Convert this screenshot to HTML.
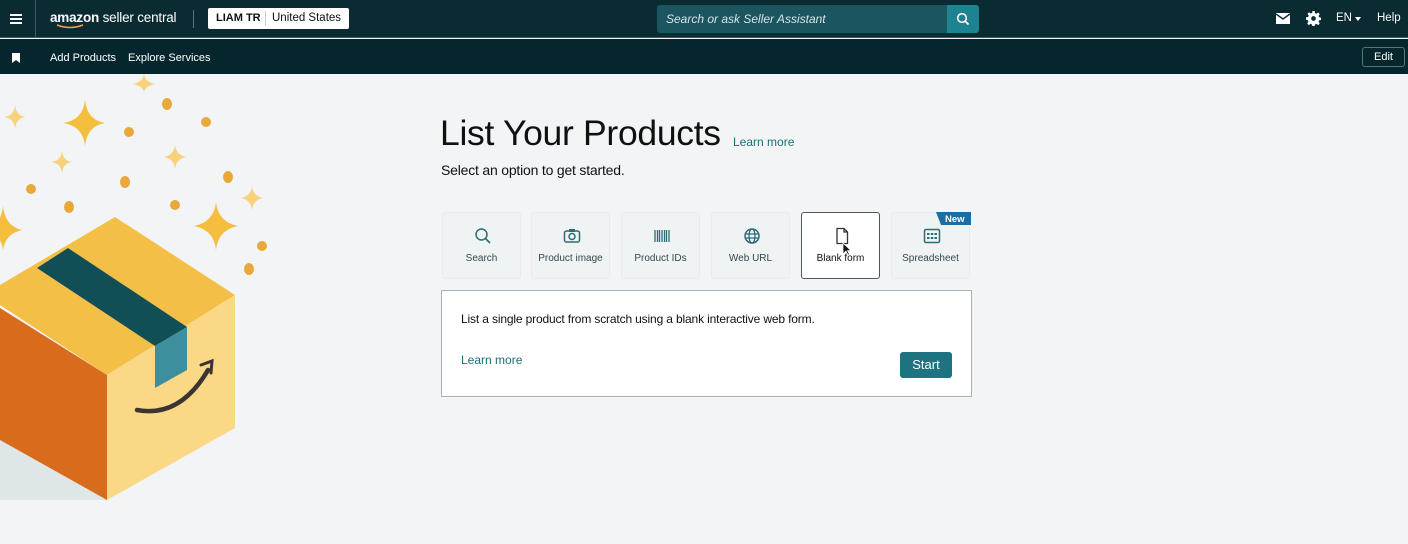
<!DOCTYPE html>
<html><head><meta charset="utf-8"><style>
*{box-sizing:border-box;margin:0;padding:0}
body{width:1408px;height:544px;overflow:hidden;background:#f2f4f5;font-family:"Liberation Sans",sans-serif;position:relative;color:#0f1111}
.top{position:absolute;left:0;top:0;width:1408px;height:38px;background:#0b2b33;border-bottom:1px solid #3d5a61}
.sub{position:absolute;left:0;top:39px;width:1408px;height:35px;background:#06262e}
.w{color:#fff;position:absolute;font-size:11.5px}
.tile{position:absolute;top:212px;width:79px;height:67px;background:#f0f3f4;border:1px solid #e8ecee;border-radius:3px;text-align:center;font-size:10px;color:#33474d}
.tile svg{position:absolute;left:31px;top:14px}
.tile span{position:absolute;left:0;right:0;top:40px}
</style></head><body>
<div class="top">
 <div style="position:absolute;left:10px;top:14px;width:12px;height:2px;background:#fff;box-shadow:0 4px 0 #fff,0 8px 0 #fff"></div>
 <div style="position:absolute;left:35px;top:0;width:1px;height:38px;background:#3d5a61"></div>
 <div class="w" style="left:50px;top:10px;font-size:13.5px;letter-spacing:-0.2px"><b>amazon</b> seller central</div>
 <svg style="position:absolute;left:56px;top:24px" width="30" height="6"><path d="M1 1 Q14 6 27 1" stroke="#f3a847" stroke-width="1.5" fill="none"/></svg>
 <div style="position:absolute;left:193px;top:10px;width:1px;height:18px;background:#5a7378"></div>
 <div style="position:absolute;left:208px;top:8px;width:141px;height:21px;background:#fff;border-radius:2px;font-size:11.5px;line-height:21px">
  <b style="position:absolute;left:8px;font-size:11px">LIAM TR</b><span style="position:absolute;left:57px;top:3px;width:1px;height:15px;background:#ccc"></span><span style="position:absolute;left:64px">United States</span></div>
 <div style="position:absolute;left:657px;top:5px;width:290px;height:28px;background:#1a5560;border-radius:3px 0 0 3px;color:#d8e4e6;font-size:12px;font-style:italic;line-height:28px;padding-left:9px">Search or ask Seller Assistant</div>
 <div style="position:absolute;left:947px;top:5px;width:32px;height:28px;background:#1d8391;border-radius:0 3px 3px 0">
  <svg width="32" height="28"><circle cx="15" cy="13" r="4.3" stroke="#fff" stroke-width="1.6" fill="none"/><path d="M18 16 L21.5 19.5" stroke="#fff" stroke-width="1.8"/></svg></div>
 <svg style="position:absolute;left:1276px;top:13px" width="14" height="11"><rect width="14" height="11" fill="#fff"/><path d="M0 1 L7 6 L14 1" stroke="#0b2b33" stroke-width="1.4" fill="none"/></svg>
 <svg style="position:absolute;left:1306px;top:11px" width="15" height="15" viewBox="0 0 16 16"><path fill="#fff" d="M6.8 0h2.4l.4 2.2 1.5.7 1.9-1.3 1.700 1.7-1.3 1.9.7 1.5 2.2.4v2.4l-2.2.4-.7 1.5 1.3 1.9-1.7 1.7-1.9-1.3-1.5.7-.4 2.2H6.8l-.4-2.2-1.5-.7-1.9 1.3-1.7-1.7 1.3-1.9-.7-1.5L0 9.2V6.8l2.2-.4.7-1.5-1.3-1.9 1.7-1.7 1.9 1.3 1.5-.7z"/><circle cx="8" cy="8" r="2.5" fill="#0b2b33"/></svg>
 <div class="w" style="left:1336px;top:12px">EN</div>
 <div style="position:absolute;left:1355px;top:17px;border:3.5px solid transparent;border-top:4px solid #fff"></div>
 <div class="w" style="left:1377px;top:12px">Help</div>
</div>
<div class="sub">
 <svg style="position:absolute;left:12px;top:14px" width="8" height="10"><path d="M0 0H8V10L4 7L0 10Z" fill="#fff"/></svg>
 <div class="w" style="left:50px;top:13px;font-size:11px">Add Products</div>
 <div class="w" style="left:128px;top:13px;font-size:11px">Explore Services</div>
 <div style="position:absolute;left:1362px;top:8px;width:43px;height:20px;border:1px solid #5a7378;border-radius:3px;color:#fff;font-size:11px;text-align:center;line-height:18px">Edit</div>
</div>

<svg style="position:absolute;left:0;top:74px" width="290" height="440" viewBox="0 74 290 440">
 <g fill="#f5be3f">
  <path d="M85 100 Q87 120 105 123 Q87 126 85 146 Q83 126 63 123 Q83 120 85 100Z"/>
  <path d="M216 202 Q218 222 238 226 Q218 230 216 250 Q214 230 194 226 Q214 222 216 202Z"/>
  <path d="M3 206 Q5 226 22 230 Q5 234 3 250 Q1 234 -15 230 Q1 226 3 206Z"/>
 </g>
 <g fill="#f8d27a">
  <path d="M15 105 Q16 116 26 117 Q16 118 15 129 Q14 118 4 117 Q14 116 15 105Z"/>
  <path d="M62 151 Q63 161 72 162 Q63 163 62 173 Q61 163 51 162 Q61 161 62 151Z"/>
  <path d="M175 145 Q176 155 186 157 Q176 159 175 169 Q174 159 164 157 Q174 155 175 145Z"/>
  <path d="M252 186 Q253 196 263 198 Q253 200 252 210 Q251 200 241 198 Q251 196 252 186Z"/>
  <path d="M144 74 Q145 82 155 84 Q145 86 144 92 Q143 86 133 84 Q143 82 144 74Z"/>
 </g>
 <g fill="#e9a83a">
  <ellipse cx="167" cy="104" rx="5" ry="6"/><circle cx="206" cy="122" r="5"/><circle cx="129" cy="132" r="5"/>
  <ellipse cx="125" cy="182" rx="5" ry="6"/><circle cx="31" cy="189" r="5"/><ellipse cx="69" cy="207" rx="5" ry="6"/>
  <circle cx="175" cy="205" r="5"/><ellipse cx="228" cy="177" rx="5" ry="6"/><circle cx="262" cy="246" r="5"/><ellipse cx="249" cy="269" rx="5" ry="6"/>
 </g>
 <path d="M0 440 L107 500 L0 500Z" fill="#dfe6e8"/>
 <path d="M115 217 L235 295 L107 375 L0 305 L0 285Z" fill="#f4bf47"/>
 <path d="M0 308 L107 375 L107 500 L0 440Z" fill="#d96b1d"/>
 <path d="M107 375 L235 295 L235 428 L107 500Z" fill="#fbd885"/>
 <path d="M37 268 L68 248 L187 327 L155 346Z" fill="#114f57"/>
 <path d="M155 346 L187 327 L187 370 L155 388Z" fill="#3e8f9d"/>
 <path d="M137 410 Q180 418 208 370" stroke="#3b3430" stroke-width="4.5" fill="none" stroke-linecap="round"/>
 <path d="M201 365 L212 361 L211 373" stroke="#3b3430" stroke-width="3" fill="none" stroke-linecap="round"/>
</svg>

<div style="position:absolute;left:440px;top:113px;font-size:35.5px;color:#0f1111;letter-spacing:-0.3px">List Your Products</div>
<div style="position:absolute;left:733px;top:135px;font-size:12px;color:#1b6e78">Learn more</div>
<div style="position:absolute;left:441px;top:162px;font-size:14px;letter-spacing:-0.2px">Select an option to get started.</div>

<div class="tile" style="left:442px"><svg width="18" height="18"><circle cx="7.5" cy="7.5" r="5.5" stroke="#2d6b75" stroke-width="1.5" fill="none"/><path d="M11.5 11.5 L16 16" stroke="#2d6b75" stroke-width="1.6"/></svg><span>Search</span></div>
<div class="tile" style="left:531px"><svg width="18" height="18"><rect x="1.5" y="4" width="15" height="11" rx="2" stroke="#2d6b75" stroke-width="1.5" fill="none"/><rect x="6" y="2" width="6" height="3" fill="#2d6b75"/><circle cx="9" cy="9.5" r="3" stroke="#2d6b75" stroke-width="1.5" fill="none"/></svg><span>Product image</span></div>
<div class="tile" style="left:621px"><svg width="18" height="18"><path d="M2 3V15M4.5 3V15M6.5 3V15M9 3V15M11.5 3V15M13.5 3V15M16 3V15" stroke="#2d6b75" stroke-width="1.3"/></svg><span>Product IDs</span></div>
<div class="tile" style="left:711px"><svg width="18" height="18"><circle cx="9" cy="9" r="7" stroke="#2d6b75" stroke-width="1.5" fill="none"/><ellipse cx="9" cy="9" rx="3" ry="7" stroke="#2d6b75" stroke-width="1.3" fill="none"/><path d="M2 7H16M2 11H16" stroke="#2d6b75" stroke-width="1.3"/></svg><span>Web URL</span></div>
<div class="tile" style="left:801px;background:#fff;border:1px solid #4a5a5e;color:#0f1111"><svg width="18" height="18"><path d="M4 1.5H11L14.5 5V16.5H4Z M11 1.5V5H14.5" stroke="#333" stroke-width="1.3" fill="none"/></svg><span>Blank form</span></div>
<svg style="position:absolute;left:842px;top:242px" width="9" height="14"><path d="M1 1V12L4 9L6 13L7.5 12.3L5.6 8.6H9Z" fill="#111" stroke="#fff" stroke-width=".8"/></svg>
<div class="tile" style="left:891px"><svg width="18" height="18"><rect x="1.5" y="2.5" width="15" height="13" rx="1.5" stroke="#2d6b75" stroke-width="1.5" fill="none"/><g fill="#2d6b75"><rect x="4" y="6" width="2.5" height="2"/><rect x="7.8" y="6" width="2.5" height="2"/><rect x="11.5" y="6" width="2.5" height="2"/><rect x="4" y="10" width="2.5" height="2"/><rect x="7.8" y="10" width="2.5" height="2"/><rect x="11.5" y="10" width="2.5" height="2"/></g></svg><span>Spreadsheet</span></div>
<svg style="position:absolute;left:936px;top:212px" width="35" height="13"><path d="M0 0H35V13H5Z" fill="#1b6ea3"/><text x="9" y="10" font-family="Liberation Sans" font-size="9.5" font-weight="bold" fill="#fff">New</text></svg>

<div style="position:absolute;left:441px;top:290px;width:531px;height:107px;background:#fff;border:1px solid #a8b0b3">
 <div style="position:absolute;left:19px;top:21px;font-size:12px;letter-spacing:-0.15px">List a single product from scratch using a blank interactive web form.</div>
 <div style="position:absolute;left:19px;top:62px;font-size:12px;color:#1b6e78">Learn more</div>
 <div style="position:absolute;left:458px;top:61px;width:52px;height:26px;background:#1d7480;border-radius:3px;color:#fff;font-size:13px;text-align:center;line-height:26px">Start</div>
</div>
</body></html>
